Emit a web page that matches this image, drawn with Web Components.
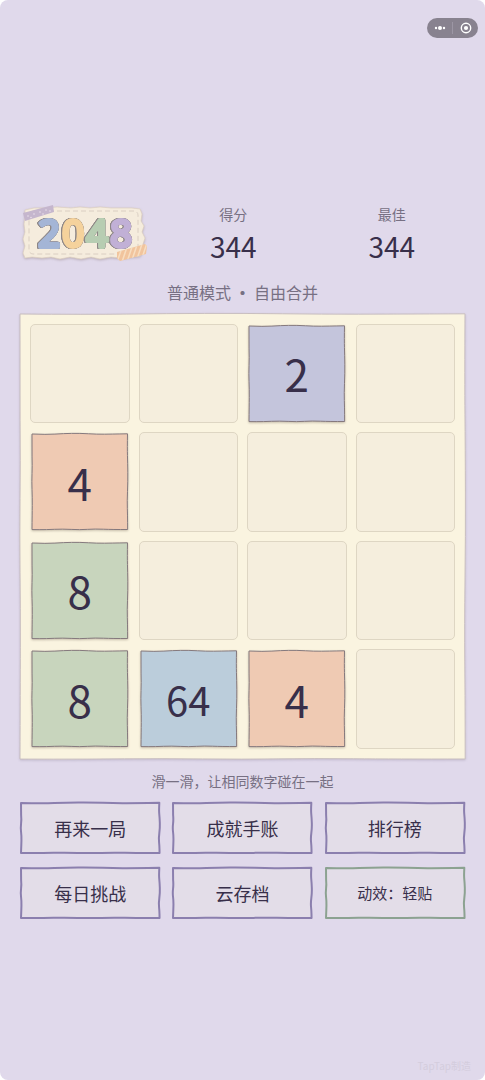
<!DOCTYPE html>
<html lang="zh-CN">
<head>
<meta charset="utf-8">
<meta name="viewport" content="width=device-width, initial-scale=1">
<title>2048</title>
<style>
html { background: #fff; }
body { margin: 0; font-family: "Noto Sans CJK SC", "Noto Sans", sans-serif; color: #382f4a; }
</style>
</head>
<body>
<game-app></game-app>
<script>
const define = (name, html, setup) => customElements.define(name, class extends HTMLElement {
  connectedCallback() {
    if (this.shadowRoot) return;
    const t = document.createElement('template');
    t.innerHTML = html;
    this.attachShadow({ mode: 'open' }).append(t.content.cloneNode(true));
    if (setup) setup(this, this.shadowRoot);
  }
});

// Hand-cut paper outline that stretches to its host.
// rough-x and rough-y scale the wobble of the side and the top/bottom edges.
define('paper-edge', `
<style>
:host { position: absolute; inset: 0; display: block; pointer-events: none; }
svg { display: block; width: 100%; height: 100%; overflow: visible; }
path { vector-effect: non-scaling-stroke; fill: var(--paper); stroke: var(--edge); stroke-width: var(--edge-width, 1px); stroke-linejoin: round; }
</style>
<svg viewBox="0 0 100 100" preserveAspectRatio="none" aria-hidden="true"><path/></svg>`, (el, root) => {
  const rx = Number(el.getAttribute('rough-x') || 1);
  const ry = Number(el.getAttribute('rough-y') || 1);
  const p = [[0,0],[15,.7],[33,-.5],[50,-.8],[68,.3],[84,.1],[100,-.2]].map(([x,n]) => [x, n * ry])
    .concat([[15,-.4],[30,.3],[50,.6],[70,-.6],[86,.1],[100,.2]].map(([y,n]) => [100 + n * rx, y]))
    .concat([[84,.1],[66,-.7],[50,.4],[32,-.6],[15,.2],[0,.1]].map(([x,n]) => [x, 100 + n * ry]))
    .concat([[84,.3],[66,.5],[50,-.4],[33,.5],[15,-.3]].map(([y,n]) => [n * rx, y]));
  let d = 'M0 0';
  for (let i = 1; i < p.length - 1; i++) {
    const corner = i === 6 || i === 12 || i === 18;
    const nx = p[i + 1];
    d += corner ? ` L${p[i]}` : ` Q${p[i]} ${(p[i][0] + nx[0]) / 2},${(p[i][1] + nx[1]) / 2}`;
  }
  root.querySelector('path').setAttribute('d', d + ' Z');
});

define('game-capsule', `
<style>
:host { display: flex; width: 51px; height: 20px; border-radius: 10px; background: #88828f; align-items: center; }
button { flex: 1; height: 100%; padding: 0; border: 0; background: none; display: grid; place-items: center; }
i { width: 1px; height: 12px; background: #9c96a4; }
</style>
<button aria-label="更多"><svg width="14" height="12" viewBox="0 0 14 12" fill="#fff"><circle cx="3" cy="6" r="1.2"/><circle cx="7" cy="6" r="2"/><circle cx="11" cy="6" r="1.2"/></svg></button>
<i></i>
<button aria-label="关闭"><svg width="12" height="12" viewBox="0 0 12 12"><circle cx="6" cy="6" r="4.7" fill="none" stroke="#fff" stroke-width="1.4"/><circle cx="6" cy="6" r="2.1" fill="#fff"/></svg></button>`);

define('game-logo', `
<style>
:host { display: block; }
svg { display: block; width: 100%; overflow: visible; }
.card { filter: drop-shadow(0 1px 1px #a89aa0aa); }
text { font: 400 38px "Noto Sans", sans-serif; stroke-width: 4; stroke-linejoin: round; stroke-linecap: round; text-anchor: middle; }
.word { filter: drop-shadow(.5px 0 0 #8d8686) drop-shadow(-.5px 0 0 #8d8686) drop-shadow(0 .5px 0 #8d8686); }
</style>
<svg viewBox="0 0 128 60" role="img" aria-label="2048">
  <defs><clipPath id="tape"><path d="M97 48 L125 40 L127 42 L126 50 L100 57 L97 54Z"/></clipPath></defs>
  <path class="card" fill="#f5ecdd" stroke="#ddd0c0" stroke-width=".7" d="M5 6 L14 4 L25 4 L37 3 L51 4 L60 3 L70 4 L80 3 L91 4 L103 4 L112 4 L120 5 L122 10 L121 17 L124 22 L122 28 L125 34 L123 40 L124 46 L120 52 L110 53 L101 54 L91 53 L80 55 L71 53 L61 55 L50 53 L40 55 L31 53 L22 54 L12 53 L5 54 L3 49 L5 42 L3 35 L5 28 L4 20 L5 13Z"/>
  <rect x="9" y="7" width="109" height="43" rx="4" fill="none" stroke="#d3c8bc" stroke-width=".8" stroke-dasharray="5 3"/>
  <path d="M3 9 L33 1 L34 8 L5 17Z" fill="#c5b6cd"/>
  <g fill="#ebe0eb"><circle cx="8" cy="12" r=".8"/><circle cx="14" cy="10" r=".8"/><circle cx="20" cy="8" r=".8"/><circle cx="26" cy="6" r=".8"/><circle cx="11" cy="13.500" r=".8"/><circle cx="23" cy="10" r=".8"/><circle cx="30" cy="7" r=".8"/></g>
  <g class="word">
    <text y="43"><tspan x="29" fill="#a4b5d6" stroke="#a4b5d6">2</tspan><tspan x="53" fill="#f5d29c" stroke="#f5d29c">0</tspan><tspan x="77" fill="#b7cdb2" stroke="#b7cdb2">4</tspan><tspan x="101" fill="#c1b0d6" stroke="#c1b0d6">8</tspan></text>
  </g>
  <g clip-path="url(#tape)"><path fill="#f1c49d" d="M95 38H128V59H95Z"/><path d="M97 58l6-17M102 58l6-18M107 58l6-18M112 56l6-18M117 55l6-18M122 54l6-18" stroke="#f7dec1" stroke-width="1.500"/></g>
</svg>`);

define('score-box', `
<style>
:host { display: flex; flex-direction: column; align-items: center; }
span { font-size: 14px; line-height: 20px; color: #777083; }
strong { font-size: 28px; line-height: 44px; font-weight: 400; }
</style>
<span><slot name="label"></slot></span><strong><slot></slot></strong>`);

define('game-cell', `
<style>
:host { display: block; box-sizing: border-box; aspect-ratio: 1; border: 1px solid #ded6c3; border-radius: 5px; background: #f5eedd; }
</style>`);

define('game-tile', `
<style>
:host { display: grid; aspect-ratio: 1; padding: 1px; box-sizing: border-box; font-size: 44px; line-height: 60px; --edge: #85797d; }
:host([value="2"]) { --paper: #c4c5dc; }
:host([value="4"]) { --paper: #efcab3; }
:host([value="8"]) { --paper: #c8d5bd; }
:host([value="64"]) { --paper: #bbcddb; font-size: 40px; }
div { position: relative; display: grid; place-items: center; margin: 1px; }
paper-edge { filter: drop-shadow(0 1px 1px #8d806f77); }
span { position: relative; }
</style>
<div><paper-edge rough-x=".7"></paper-edge><span></span></div>`, (el, root) => {
  root.querySelector('span').textContent = el.getAttribute('value');
});

define('game-board', `
<style>
:host { position: relative; display: block; --paper: #faf4e0; --edge: #c9bfc0; }
paper-edge { filter: drop-shadow(0 1px 1px #8a7d9a55); }
div { position: relative; display: grid; grid-template-columns: repeat(4, 1fr); gap: 9px; padding: 10px; }
</style>
<paper-edge rough-x=".2" rough-y=".2"></paper-edge><div></div>`, (el, root) => {
  const cells = [0,0,2,0, 4,0,0,0, 8,0,0,0, 8,64,4,0];
  for (const v of cells) {
    const c = document.createElement(v ? 'game-tile' : 'game-cell');
    if (v) c.setAttribute('value', v);
    root.querySelector('div').append(c);
  }
});

define('sketch-button', `
<style>
:host { display: block; --paper: #e3dde8; --edge: #8b7fae; --edge-width: 2px; }
:host([tone="green"]) { --edge: #8ca291; }
:host([tone="green"]) button { font-size: 15px; }
button { position: relative; display: block; width: 100%; height: 52px; padding: 0; border: 0; background: none; font: inherit; font-size: 18px; line-height: 28px; color: inherit; cursor: pointer; }
span { position: relative; }
paper-edge { inset: 1px; }
</style>
<button><paper-edge rough-x=".8" rough-y="1.500"></paper-edge><span><slot></slot></span></button>`);

define('game-app', `
<style>
:host { position: relative; display: flex; flex-direction: column; box-sizing: border-box; min-height: 100vh; padding: 18px 20px 6px; border-radius: 8px; background: #e0d9eb; }
game-capsule { align-self: flex-end; margin-right: -13px; }
main { flex: 1; display: flex; flex-direction: column; justify-content: center; padding-top: 26px; }
header { display: grid; grid-template-columns: 128px 1fr 1fr; gap: 12px; align-items: start; }
p { margin: 0; text-align: center; color: #777083; }
.mode { font-size: 16px; line-height: 24px; margin: 12px 0 10px; }
.hint { font-size: 14px; line-height: 20px; margin: 12px 0 11px; }
nav { display: grid; grid-template-columns: repeat(3, 1fr); gap: 13px 12px; }
footer { align-self: flex-end; margin-right: -6px; font-size: 10px; line-height: 16px; color: #d4cddd; }
</style>
<game-capsule></game-capsule>
<main>
  <header>
    <game-logo></game-logo>
    <score-box><span slot="label">得分</span>344</score-box>
    <score-box><span slot="label">最佳</span>344</score-box>
  </header>
  <p class="mode">普通模式 <b>·</b> 自由合并</p>
  <game-board></game-board>
  <p class="hint">滑一滑，让相同数字碰在一起</p>
  <nav aria-label="游戏菜单">
    <sketch-button>再来一局</sketch-button>
    <sketch-button>成就手账</sketch-button>
    <sketch-button>排行榜</sketch-button>
    <sketch-button>每日挑战</sketch-button>
    <sketch-button>云存档</sketch-button>
    <sketch-button tone="green">动效：轻贴</sketch-button>
  </nav>
</main>
<footer>TapTap制造</footer>`);
</script>
</body>
</html>
